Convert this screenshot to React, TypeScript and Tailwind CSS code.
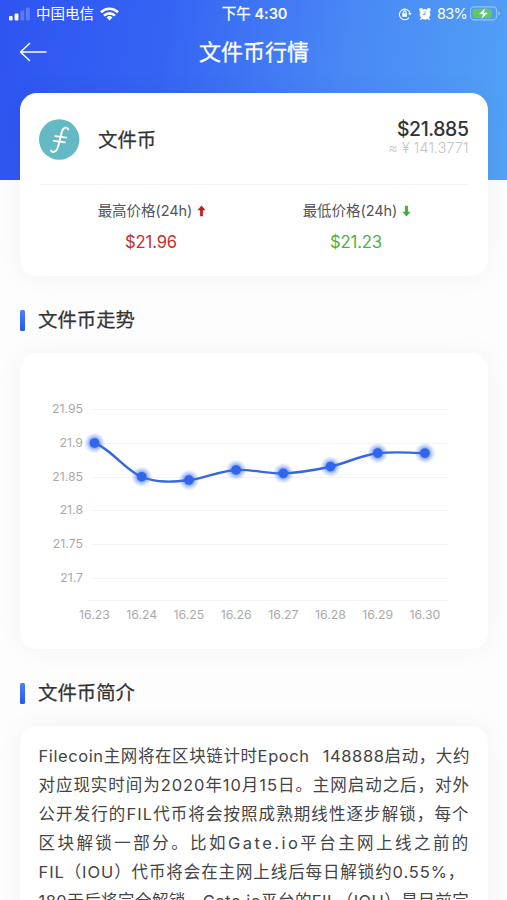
import type { ReactNode } from 'react';

const SANS = "font-['Inter','Noto_Sans_CJK_SC',sans-serif]";

const points = [
  { label: '16.23', value: 21.9 },
  { label: '16.24', value: 21.85 },
  { label: '16.25', value: 21.845 },
  { label: '16.26', value: 21.86 },
  { label: '16.27', value: 21.855 },
  { label: '16.28', value: 21.865 },
  { label: '16.29', value: 21.885 },
  { label: '16.30', value: 21.885 },
];
const ticks = [21.95, 21.9, 21.85, 21.8, 21.75, 21.7];

const px = (i: number) => 74.5 + i * 47.2;
const py = (v: number) => 90 + (21.9 - v) * 674;

function StatusBar() {
  return (
    <div className="flex h-[27px] items-center pl-[9px] pr-[6px] text-[14.5px] leading-[27px]">
      <div className="flex flex-1 items-center">
        <svg className="mt-[1px] mr-[5px] h-[14px] w-[21px]" viewBox="0 0 21 14" fill="white">
          <rect x="0" y="9" width="3.6" height="4.5" rx="1" />
          <rect x="5.6" y="6.5" width="3.8" height="7" rx="1" />
          <rect x="11.4" y="3.5" width="3.8" height="10" rx="1" opacity="0.22" />
          <rect x="17" y="0.5" width="3.8" height="13" rx="1" opacity="0.22" />
        </svg>
        <span className="ml-[1px]">中国电信</span>
        <svg className="ml-[6px] h-[14px] w-[19px]" viewBox="0 0 19 14" fill="none" stroke="white" strokeWidth="2.6">
          <path d="M1 5.2a12.2 12.2 0 0 1 17 0" />
          <path d="M4 8.6a7.8 7.8 0 0 1 11 0" />
          <path d="M9.5 13.4l-2.9-2.9a4.2 4.2 0 0 1 5.8 0z" fill="white" stroke="none" />
        </svg>
      </div>
      <span className="mr-[1px] tracking-[-0.1px]">
        <span className="[-webkit-text-stroke:0.3px_white]">下午</span> <span className="font-semibold">4:30</span>
      </span>
      <div className="flex flex-1 items-center justify-end">
        <svg className="mr-[7px] h-[14px] w-[14px]" viewBox="0 0 14 14" fill="none" stroke="white" strokeWidth="1.1">
          <path d="M11 10.6A5.3 5.3 0 1 1 11.9 6.2" />
          <path d="M10.2 6.1h3.4l-1.7 2.4z" fill="white" stroke="none" />
          <rect x="4.2" y="6.2" width="4.8" height="3.5" rx="0.5" fill="white" stroke="none" />
          <path d="M5.2 6.4V5.3a1.4 1.4 0 0 1 2.8 0v1.1" />
        </svg>
        <svg className="mr-[6px] h-[14px] w-[12px]" viewBox="0 0 12 14" fill="white">
          <circle cx="6" cy="7.3" r="5.3" />
          <circle cx="2.1" cy="2.8" r="1.9" />
          <circle cx="9.9" cy="2.8" r="1.9" />
          <path d="M2.8 10.8l-1.3 2M9.2 10.8l1.3 2" stroke="white" strokeWidth="1.4" />
          <path d="M6 4.4v3.1H3.8" fill="none" stroke="#4a88f5" strokeWidth="0.8" />
        </svg>
        <span className="mr-[3px] tracking-[-0.7px]">83%</span>
        <svg className="h-[15px] w-[31px]" viewBox="0 0 31 15" fill="none">
          <rect x="0.6" y="0.9" width="26" height="13" rx="3.6" stroke="white" strokeOpacity="0.4" strokeWidth="1.1" />
          <rect x="2.5" y="2.7" width="19" height="9.4" rx="2" fill="#62c863" />
          <path d="M28.4 5.3v4.2q1.5-.7 1.5-2.1t-1.5-2.1z" fill="white" fillOpacity="0.4" />
          <path d="M15.4 1.5L8.6 8.2h4l-1.4 5.2 7.2-6.9h-4.2z" fill="white" stroke="#62b88b" strokeWidth="0.6" />
        </svg>
      </div>
    </div>
  );
}

function Card({ className, children }: { className: string; children: ReactNode }) {
  return (
    <section className={`mx-auto w-[468px] rounded-[17px] bg-white shadow-[0_0_28px_rgba(0,0,0,0.045)] ${className}`}>
      {children}
    </section>
  );
}

function SectionTitle({ className, children }: { className: string; children: ReactNode }) {
  return (
    <div className={`flex items-center pl-5 ${className}`}>
      <i className="mr-[13.5px] h-[21px] w-[4.5px] rounded-[1.5px] bg-linear-to-b from-[#4d7ffa] to-[#2557f0]" />
      <h2 className="text-[19.4px] leading-[28px] text-[#333] [-webkit-text-stroke:0.25px_#333]">{children}</h2>
    </div>
  );
}

function FilecoinLogo() {
  return (
    <svg className="h-[41px] w-[41px]" viewBox="0 0 41 41" fill="none">
      <circle cx="20.2" cy="20.5" r="20.2" fill="#63bac5" />
      <g stroke="white" strokeLinecap="round">
        <path d="M29.3 10.6C28.6 8 24.6 7.4 22.9 12.6C21.4 17.5 20.5 23.5 18.8 28.5C17.2 33.4 13.3 34 12 31.6" strokeWidth="1.9" />
        <path d="M16.2 17.2L27.4 18.6" strokeWidth="1.7" />
        <path d="M14.8 21.9L26 23.3" strokeWidth="1.7" />
      </g>
    </svg>
  );
}

function PriceArrow({ down = false }: { down?: boolean }) {
  return (
    <svg
      className={down ? 'h-[12px] w-[9px] rotate-180 text-[#3fae35]' : 'h-[12px] w-[9px] text-[#c21f1f]'}
      viewBox="0 0 9 12"
      fill="currentColor"
    >
      <path d="M4.5 0.5L8.6 5.3H5.9V11.3H3.1V5.3H0.4z" />
    </svg>
  );
}

function TrendChart() {
  const line =
    'M74.5 90C90 95 106 118 121.7 124C137 130 153 129 168.9 127.3C185 125 200 118 216.1 117C232 116 247 121 263.3 120.4C279 120 295 117 310.5 113.8C326 110 342 102 357.7 100.3C373 98.5 389 99.5 404.9 100.3';
  return (
    <svg className="block h-[296px] w-[468px]" viewBox="0 0 468 296">
      <defs>
        <radialGradient id="glow">
          <stop offset="0.4" stopColor="#2f64ea" stopOpacity="0.65" />
          <stop offset="0.72" stopColor="#3d70f2" stopOpacity="0.25" />
          <stop offset="1" stopColor="#3d70f2" stopOpacity="0" />
        </radialGradient>
      </defs>
      {ticks.map((t) => (
        <g key={t}>
          <line x1="71" x2="428" y1={Math.round(py(t)) + 0.5} y2={Math.round(py(t)) + 0.5} stroke="#f4f4f4" />
          <text x="63" y={py(t) + 4} textAnchor="end" fontSize="12.3" fill="#aaa">
            {t}
          </text>
        </g>
      ))}
      <line x1="68" x2="428" y1="247.5" y2="247.5" stroke="#f4f4f4" />
      <path d={line} fill="none" stroke="#3667e2" strokeWidth="2.4" />
      {points.map((p, i) => (
        <g key={p.label}>
          <circle cx={px(i)} cy={py(p.value)} r="10.5" fill="url(#glow)" />
          <circle cx={px(i)} cy={py(p.value)} r="4.8" fill="#2f66ec" />
          <text x={px(i)} y="266" textAnchor="middle" fontSize="12.3" fill="#aaa">
            {p.label}
          </text>
        </g>
      ))}
    </svg>
  );
}

export default function App() {
  return (
    <div className={`h-[900px] w-[507px] overflow-hidden bg-[#fdfdfd] ${SANS}`}>
      <header className="h-[180px] bg-[linear-gradient(100deg,#2e54f1_0%,#3564f3_32%,#4988f5_66%,#52a2f5_100%)] text-white">
        <StatusBar />
        <nav className="flex h-[50px] items-center px-[19px]">
          <svg className="h-[20px] w-[28px]" viewBox="0 0 28 20" fill="none" stroke="white" strokeWidth="1.5" strokeLinecap="round" strokeLinejoin="round">
            <path d="M27 10H1.5M10.5 1.5L1.5 10l9 8.5" />
          </svg>
          <h1 className="flex-1 pr-[27px] text-center text-[22px] [-webkit-text-stroke:0.3px_white]">文件币行情</h1>
        </nav>
      </header>

      <Card className="relative -mt-[87px] h-[183px] px-[19px]">
        <div className="flex h-[92px] items-center border-b border-[#f3f3f3] pt-[2px]">
          <FilecoinLogo />
          <span className="mt-[3px] ml-[18.5px] flex-1 text-[19.4px] text-[#333] [-webkit-text-stroke:0.25px_#333]">文件币</span>
          <div className="mt-[-5px] text-right">
            <div className="text-[19.4px] leading-[22px] font-medium tracking-[-0.4px] text-[#333]">$21.885</div>
            <div className="text-[14.8px] leading-[17px] font-light tracking-[-0.15px] text-[#c4c4c4]">≈ ¥ 141.3771</div>
          </div>
        </div>
        <div className="grid grid-cols-2 px-[10px] pt-[15px] text-center">
          <div>
            <div className="flex items-center justify-center gap-[5px] pl-[2px] text-[14.5px] leading-[22px] tracking-[-0.05px] text-[#555]">
              最高价格(24h)
              <PriceArrow />
            </div>
            <div className="mt-[9px] text-[16.7px] leading-[22px] tracking-[-0.2px] text-[#c5312b]">$21.96</div>
          </div>
          <div>
            <div className="flex items-center justify-center gap-[5px] pl-[2px] text-[14.5px] leading-[22px] tracking-[-0.05px] text-[#555]">
              最低价格(24h)
              <PriceArrow down />
            </div>
            <div className="mt-[9px] text-[16.7px] leading-[22px] tracking-[-0.2px] text-[#4db341]">$21.23</div>
          </div>
        </div>
      </Card>

      <SectionTitle className="mt-[30px] mb-[19px]">文件币走势</SectionTitle>
      <Card className="h-[296px]">
        <TrendChart />
      </Card>

      <SectionTitle className="mt-[30px] mb-[19px]">文件币简介</SectionTitle>
      <Card className="h-[320px] px-[19px] pt-[16px]">
        <div className="text-[16.5px] leading-[29px] whitespace-pre text-[#444]">
          <p className="tracking-[0.6px] [word-spacing:-0.9px]">Filecoin主网将在区块链计时Epoch&nbsp;&nbsp; 148888启动，大约</p>
          <p className="tracking-[0.95px]">对应现实时间为2020年10月15日。主网启动之后，对外</p>
          <p className="tracking-[1.08px]">公开发行的FIL代币将会按照成熟期线性逐步解锁，每个</p>
          <p className="tracking-[2.45px]">区块解锁一部分。比如Gate.io平台主网上线之前的</p>
          <p className="tracking-[0.9px]">FIL（IOU）代币将会在主网上线后每日解锁约0.55%，</p>
          <p className="tracking-[0.45px]">180天后将完全解锁。Gate.io平台的FIL（IOU）是目前完</p>
        </div>
      </Card>
    </div>
  );
}
